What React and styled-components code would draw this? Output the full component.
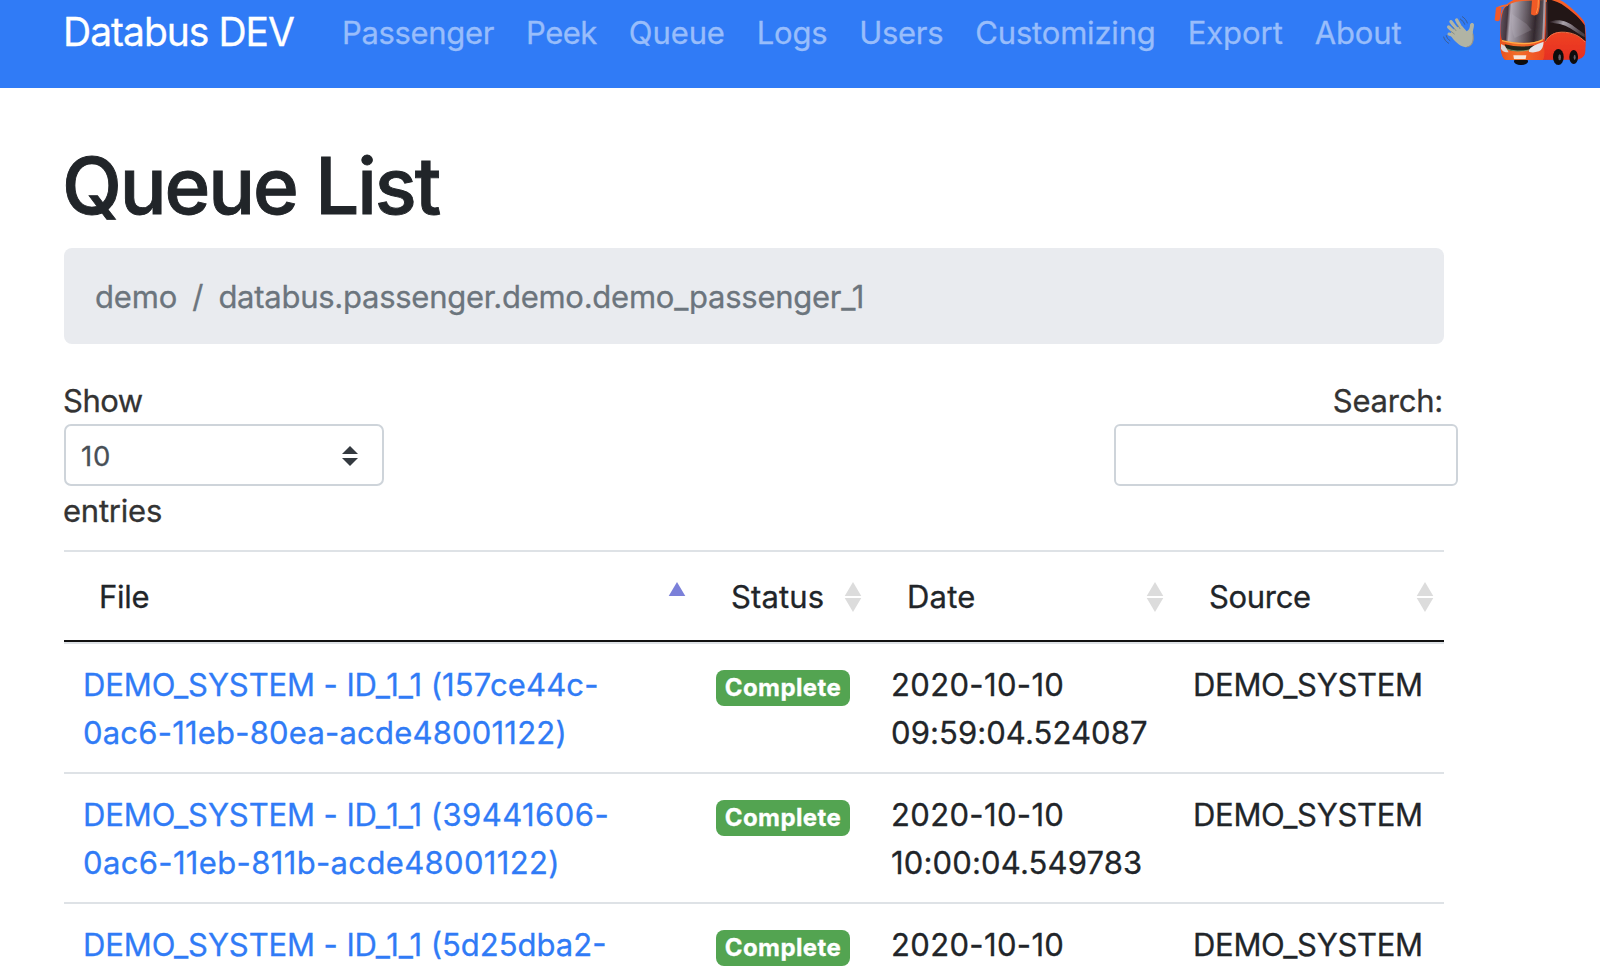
import React from "react";
import styled, { createGlobalStyle } from "styled-components";

const GlobalStyle = createGlobalStyle`
  * { box-sizing: border-box; }
  body {
    margin: 0;
    height: 974px;
    overflow: hidden;
    background: #fff;
    color: #212529;
    font-family: Inter, "Liberation Sans", sans-serif;
    font-size: 31px;
    font-weight: 400;
    line-height: 48px;
    -webkit-text-stroke: 0.3px currentColor;
  }
`;

const Navbar = styled.header`
  display: flex;
  align-items: flex-start;
  height: 88px;
  padding-left: 62px;
  background: #307bf6;
`;

const Brand = styled.a`
  width: 264px;
  padding: 2px 0 0 1px;
  color: #fff;
  font-size: 39px;
  line-height: 60px;
  letter-spacing: -1px;
  white-space: nowrap;
`;

const Nav = styled.nav`
  display: flex;
  padding-top: 9px;
`;

const NavLink = styled.a`
  padding: 0 16px;
  color: #98bdfb;
  letter-spacing: ${(p) => p.$track}px;
`;

const WaveIcon = styled.svg`
  flex: none;
  width: 40px;
  height: 40px;
  margin: 12px 0 0 auto;
  opacity: 0.72;
`;

const BusIcon = styled.svg`
  flex: none;
  width: 116px;
  height: 70px;
  margin-left: 4px;
`;

const Page = styled.main`
  width: 1380px;
  height: 886px;
  margin-left: 64px;
  padding-top: 50px;
`;

const Title = styled.h1`
  margin: 0 0 14px -2px;
  font-size: 78px;
  font-weight: 500;
  line-height: 96px;
  letter-spacing: -2.15px;
  -webkit-text-stroke: 0.9px currentColor;
`;

const Breadcrumb = styled.div`
  display: flex;
  gap: 15px;
  height: 96px;
  padding: 25px 31px;
  border-radius: 8px;
  background: #e9ebef;
  color: #6c757d;
`;

const Crumb = styled.span`
  letter-spacing: ${(p) => p.$track || 0}px;
`;

const Controls = styled.div`
  display: flex;
  justify-content: space-between;
  height: 206px;
  padding-top: 32px;
  color: #333;
`;

const Length = styled.label`
  display: flex;
  flex-direction: column;
  width: 320px;
`;

const LabelText = styled.span`
  height: 48px;
  margin: 0 ${(p) => p.$end || 0}px 0 -1px;
  line-height: 50px;
  letter-spacing: ${(p) => p.$track || -0.22}px;
`;

const SelectBox = styled.span`
  display: flex;
  align-items: center;
  justify-content: space-between;
  height: 62px;
  padding: 2px 24px 0 15px;
  border: 2px solid #ced4da;
  border-radius: 7px;
  color: #495057;
  font-size: 27.5px;
  letter-spacing: 0.8px;
`;

const Search = styled.label`
  display: flex;
  flex-direction: column;
  align-items: flex-end;
`;

const SearchInput = styled.input`
  width: 344px;
  height: 62px;
  margin-right: -14px;
  border: 2px solid #ced4da;
  border-radius: 6px;
  background: #fff;
  outline: none;
`;

const Table = styled.div`
  border-top: 2px solid #dee2e6;
`;

const Row = styled.div`
  display: grid;
  grid-template-columns: 634px 174px 302px 270px;
  height: 130px;
  padding-top: 17px;
  border-top: 2px solid #dee2e6;

  &:last-child {
    height: 70px;
  }
`;

const HeadRow = styled(Row)`
  height: 90px;
  padding-top: 0;
  border-top: 0;
  border-bottom: 2px solid #111;
`;

const HeadCell = styled.div`
  display: flex;
  align-items: center;
  justify-content: space-between;
  padding: 2px ${(p) => (p.$active ? 12 : 10)}px 0 ${(p) => p.$start}px;
  letter-spacing: ${(p) => p.$track}px;
`;

const SortIcon = styled.svg`
  width: 18px;
  height: 30px;
`;

const Cell = styled.div`
  padding-left: 19px;
  letter-spacing: ${(p) => p.$track || 0}px;
  white-space: nowrap;
`;

const FileLink = styled.a`
  color: #307bf6;
`;

const Line = styled.span`
  display: block;
  letter-spacing: ${(p) => p.$track || 0}px;
`;

const SystemName = styled.span`
  letter-spacing: -0.1px;
`;

const Badge = styled.span`
  display: block;
  width: 134px;
  height: 36px;
  margin: 9px 0 0 -1px;
  border-radius: 8px;
  background: #53a451;
  color: #fff;
  font-size: 24px;
  font-weight: 700;
  line-height: 35px;
  letter-spacing: 0.4px;
  text-align: center;
`;

const links = [
  ["Passenger", -0.34],
  ["Peek", -0.5],
  ["Queue", -0.1],
  ["Logs", -0.28],
  ["Users", -0.3],
  ["Customizing", -0.18],
  ["Export", -0.06],
  ["About", -0.15],
];

const heads = [
  { label: "File", track: -0.3, start: 35, active: true },
  { label: "Status", track: 0.15, start: 33 },
  { label: "Date", track: 0.25, start: 35 },
  { label: "Source", track: -0.33, start: 35 },
];

const rows = [
  {
    id: "(157ce44c-",
    idTrack: 0.13,
    rest: "0ac6-11eb-80ea-acde48001122)",
    restTrack: 0.2,
    date: "2020-10-10",
    time: "09:59:04.524087",
    timeTrack: 0.08,
  },
  {
    id: "(39441606-",
    idTrack: 0.45,
    rest: "0ac6-11eb-811b-acde48001122)",
    restTrack: 0.35,
    date: "2020-10-10",
    time: "10:00:04.549783",
    timeTrack: 0.15,
  },
  { id: "(5d25dba2-", idTrack: 0, date: "2020-10-10" },
];

function Wave() {
  return (
    <WaveIcon viewBox="60 36 120 120">
      <g fill="none" stroke="#e3cb85" strokeLinecap="round">
        <path d="M98 106 L87 102" strokeWidth="9" />
        <path d="M104 98 L86 81" strokeWidth="10" />
        <path d="M112 90 L93 65" strokeWidth="10" />
        <path d="M124 86 L110 60" strokeWidth="10" />
      </g>
      <path d="M89 103 L104 84 L126 78 L140 94 C147 90 150 84 150 74 C152 67 161 67 162 74 C162 85 157 91 159 103 C163 124 158 138 142 141 C124 144 112 130 100 118 Z" fill="#e3cb85" />
      <path d="M140 141 C156 139 162 124 159 101" fill="none" stroke="#b8945a" strokeWidth="3" />
      <path d="M93 94 L103 102 M98 80 L108 92 M112 74 L120 86" fill="none" stroke="#8e7842" strokeWidth="2" strokeLinecap="round" />
      <g fill="none" stroke="#45484c" strokeWidth="2.4" strokeLinecap="round">
        <path d="M121 57 C127 61 131 66 134 73 M127 50 C135 55 139 61 142 69" />
        <path d="M79 107 C81 114 84 118 90 122 M71 111 C74 120 78 125 86 130" />
      </g>
    </WaveIcon>
  );
}

function Bus() {
  return (
    <BusIcon viewBox="0 0 348 210">
      <defs>
        <linearGradient id="glass" x1="0" x2="1" y1="0" y2="0.08">
          <stop offset="0" stopColor="#6a5a66" />
          <stop offset="0.18" stopColor="#43353f" />
          <stop offset="0.25" stopColor="#b0a9b5" />
          <stop offset="0.42" stopColor="#8d8691" />
          <stop offset="0.62" stopColor="#625860" />
          <stop offset="0.82" stopColor="#33282e" />
          <stop offset="1" stopColor="#5d565e" />
        </linearGradient>
        <linearGradient id="side" x1="0" x2="0" y1="0" y2="1">
          <stop offset="0" stopColor="#f5642a" />
          <stop offset="0.6" stopColor="#ee4022" />
          <stop offset="1" stopColor="#e62f20" />
        </linearGradient>
        <linearGradient id="front" x1="0" x2="1" y1="0" y2="0">
          <stop offset="0" stopColor="#e9511e" />
          <stop offset="0.4" stopColor="#f2702c" />
          <stop offset="1" stopColor="#ee4a22" />
        </linearGradient>
        <linearGradient id="swoosh" x1="0" x2="1" y1="0" y2="0.3">
          <stop offset="0" stopColor="#5a5154" stopOpacity="0.2" />
          <stop offset="0.4" stopColor="#aaa3ac" />
          <stop offset="1" stopColor="#4c4146" />
        </linearGradient>
        <filter id="soft"><feGaussianBlur stdDeviation="1.8" /></filter>
      </defs>
      <g filter="url(#soft)">
        <ellipse cx="111" cy="184" rx="21" ry="11" fill="#080709" />
        <path d="M50 50 C54 24 66 6 104 -6 L215 -6 C245 5 278 36 299 62 C306 74 307 108 304 153 C303 169 296 175 279 179 L64 180 C54 176 50 152 48 118 Z" fill="url(#side)" />
        <path d="M48 116 L176 124 L181 151 Q182 175 176 180 L65 180 C51 172 47 142 48 116 Z" fill="url(#front)" />
        <g fill="#0b090c">
          <ellipse cx="223" cy="171" rx="16" ry="24" />
          <ellipse cx="269" cy="171" rx="13" ry="21" />
        </g>
        <path d="M57 34 C62 14 88 6 114 3 L182 0 C181 38 178 86 174 120 Q134 136 56 122 C48 117 48 62 57 34 Z" fill="url(#glass)" />
        <path d="M84 42 L128 72 L143 90 L92 114 C82 94 82 65 84 42 Z" fill="#cec7d0" opacity="0.18" />
        <path d="M54 122 Q132 141 177 119" fill="none" stroke="#ffad45" strokeWidth="4" />
        <path d="M182 0 L178 118" stroke="#a79ba4" strokeWidth="6" />
        <path d="M189 -3 C211 1 230 9 244 20 C266 36 290 56 302 76 L305 124 C280 103 249 94 222 97 C204 100 192 112 184 126 Z" fill="#211316" />
        <path d="M188 6 L188 90 C190 104 188 116 184 124" fill="none" stroke="#51373b" strokeWidth="5" />
        <path d="M196 66 C223 54 250 64 271 80 C286 91 297 98 302 103 L302 112 C281 100 267 88 244 77 C226 70 208 70 196 66 Z" fill="url(#swoosh)" />
        <path d="M184 126 C196 102 219 91 258 99 C279 104 293 114 303 126" fill="none" stroke="#f47346" strokeWidth="3" />
        <path d="M62 133 Q108 145 151 136 Q140 153 112 153 Q80 156 65 145 Z" fill="#22251e" />
        <path d="M66 146 Q98 158 136 150" fill="none" stroke="#82b77a" strokeWidth="3" opacity="0.7" />
        <path d="M51 132 L63 138 L74 157 Q55 157 51 146 Z" fill="#d8d4d6" />
        <path d="M135 149 Q140 138 179 125 Q178 147 165 154 Q146 160 135 155 Z" fill="#e4e3e8" />
        <path d="M88 166 L127 166 L125 177 L90 177 Z" fill="#f5e5dc" />
        <path d="M41 25 C50 17 63 17 72 15" fill="none" stroke="#f26a30" strokeWidth="5" />
        <path d="M36 23 Q43 17 53 25 L47 61 Q40 67 32 60 Z" fill="#f35a2a" />
        <path d="M144 -4 L168 -4 Q169 24 162 42 Q151 50 141 43 Z" fill="#f05a25" />
        <path d="M163 0 Q164 24 157 40" fill="none" stroke="#ff9a4b" strokeWidth="3" />
        <ellipse cx="227" cy="172" rx="4" ry="9" fill="#65616a" />
        <ellipse cx="272" cy="172" rx="3" ry="8" fill="#65616a" />
      </g>
    </BusIcon>
  );
}

function Sort({ active }) {
  return (
    <SortIcon viewBox="0 0 18 30">
      <path d="M9 0 L17.3 14 H0.7 Z" fill={active ? "#7b80d9" : "#dcdcdc"} />
      {!active && <path d="M0.7 16 H17.3 L9 30 Z" fill="#dcdcdc" />}
    </SortIcon>
  );
}

export default function App() {
  return (
    <>
      <GlobalStyle />
      <Navbar>
        <Brand>Databus DEV</Brand>
        <Nav>
          {links.map(([label, track]) => (
            <NavLink key={label} $track={track}>{label}</NavLink>
          ))}
        </Nav>
        <Wave />
        <Bus />
      </Navbar>
      <Page>
        <Title>Queue List</Title>
        <Breadcrumb>
          <Crumb $track={-0.15}>demo</Crumb>
          <Crumb>/</Crumb>
          <Crumb $track={-0.26}>databus.passenger.demo.demo_passenger_1</Crumb>
        </Breadcrumb>
        <Controls>
          <Length>
            <LabelText $track={-0.5}>Show</LabelText>
            <SelectBox>
              10
              <svg width="16" height="20" viewBox="0 0 16 20" fill="#343a40">
                <path d="M8 0 L16 8 H0 Z M0 12 H16 L8 20 Z" />
              </svg>
            </SelectBox>
            <LabelText>entries</LabelText>
          </Length>
          <Search>
            <LabelText $end={1}>Search:</LabelText>
            <SearchInput type="search" aria-label="Search" />
          </Search>
        </Controls>
        <Table>
          <HeadRow>
            {heads.map((h) => (
              <HeadCell key={h.label} $track={h.track} $start={h.start} $active={h.active}>
                {h.label}
                <Sort active={h.active} />
              </HeadCell>
            ))}
          </HeadRow>
          {rows.map((row) => (
            <Row key={row.id}>
              <Cell>
                <FileLink>
                  <Line $track={row.idTrack}>
                    <SystemName>DEMO_SYSTEM - ID_1_1 </SystemName>{row.id}
                  </Line>
                  {row.rest && <Line $track={row.restTrack}>{row.rest}</Line>}
                </FileLink>
              </Cell>
              <Cell><Badge>Complete</Badge></Cell>
              <Cell>
                <Line $track={0.35}>{row.date}</Line>
                {row.time && <Line $track={row.timeTrack}>{row.time}</Line>}
              </Cell>
              <Cell $track={-0.3}>DEMO_SYSTEM</Cell>
            </Row>
          ))}
        </Table>
      </Page>
    </>
  );
}
